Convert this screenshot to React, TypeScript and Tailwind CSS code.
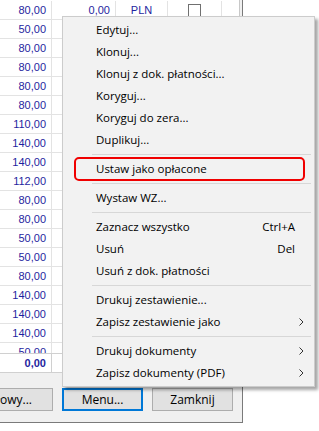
import React from "react";

const values = [
  "80,00", "50,00", "80,00", "80,00", "80,00", "80,00", "110,00", "140,00",
  "140,00", "112,00", "80,00", "80,00", "50,00", "50,00", "80,00", "140,00",
  "140,00", "140,00", "50,00",
];

type Entry =
  | { sep: true }
  | { sep?: false; label: string; shortcut?: string; sub?: boolean; marked?: boolean };

const menu: Entry[] = [
  { label: "Edytuj..." },
  { label: "Klonuj..." },
  { label: "Klonuj z dok. płatności..." },
  { label: "Koryguj..." },
  { label: "Koryguj do zera..." },
  { label: "Duplikuj..." },
  { sep: true },
  { label: "Ustaw jako opłacone", marked: true },
  { sep: true },
  { label: "Wystaw WZ..." },
  { sep: true },
  { label: "Zaznacz wszystko", shortcut: "Ctrl+A" },
  { label: "Usuń", shortcut: "Del" },
  { label: "Usuń z dok. płatności" },
  { sep: true },
  { label: "Drukuj zestawienie..." },
  { label: "Zapisz zestawienie jako", sub: true },
  { sep: true },
  { label: "Drukuj dokumenty", sub: true },
  { label: "Zapisz dokumenty (PDF)", sub: true },
];

function Chevron() {
  return (
    <svg width="5" height="8" viewBox="0 0 5 8" className="block">
      <path d="M0.5 0.5 L4 4 L0.5 7.5" fill="none" stroke="#333" strokeWidth="1" />
    </svg>
  );
}

function ContextMenu() {
  return (
    <div className="absolute left-[62px] top-[16px] w-[253px] bg-[#f2f2f2] border border-[#cccccc] py-[2px] shadow-[3px_3px_3px_rgba(0,0,0,0.35)] font-['Open_Sans',sans-serif] text-[11.5px] text-black">
      {menu.map((m, i) =>
        m.sep ? (
          <div key={i} className="h-[7px] flex items-center pl-[29px] pr-[3px]">
            <div className="h-px w-full bg-[#d7d7d7]" />
          </div>
        ) : (
          <div key={i} className="relative h-[22px] flex items-center pl-[33px] pr-[10px]">
            <span className="flex-1 whitespace-nowrap">{m.label}</span>
            {m.shortcut && <span className="mr-[9px]">{m.shortcut}</span>}
            {m.sub && <Chevron />}
            {m.marked && (
              <div className="absolute left-[11px] right-[9px] -top-[1px] -bottom-[1px] border-2 border-[#f00000] rounded-[5px]" />
            )}
          </div>
        )
      )}
    </div>
  );
}

function Row({ v, full }: { v: string; full: boolean }) {
  return (
    <div className="flex h-[19px] border-b border-[#e3e3e3] shrink-0">
      <div className="w-[52px] border-r border-[#e3e3e3] text-right pr-[5px] leading-[18px]">{v}</div>
      <div className="w-[64px] border-r border-[#e3e3e3] text-right pr-[5px] leading-[18px]">{full ? "0,00" : ""}</div>
      <div className="w-[52px] border-r border-[#e3e3e3] text-center leading-[18px]">{full ? "PLN" : ""}</div>
      <div className="w-[54px] border-r border-[#e3e3e3] flex justify-center pt-[3px]">
        {full && <div className="w-[13px] h-[13px] border border-[#707070] bg-white" />}
      </div>
      <div className="flex-1" />
    </div>
  );
}

export default function App() {
  return (
    <div className="relative w-[319px] h-[431px] overflow-hidden bg-white font-['Liberation_Sans',sans-serif]">
      <div className="w-[243px] h-[423px] bg-[#f0f0f0] border-r border-b border-[#7a7a7a] flex flex-col">
        {/* grid */}
        <div className="w-[240px] h-[353px] bg-white border-r border-[#c8c8c8] overflow-hidden pt-[1px] text-[11px] text-[#1f1fa0] flex flex-col">
          {values.map((v, i) => (
            <Row key={i} v={v} full={i === 0} />
          ))}
        </div>
        {/* summary row */}
        <div className="w-[240px] h-[20px] flex border-y border-[#d0d0d0] bg-white text-[11px] font-bold text-[#1f1fa0]">
          <div className="w-[52px] border-r border-[#d0d0d0] text-right pr-[5px] leading-[18px]">0,00</div>
          <div className="flex-1" />
        </div>
        {/* buttons */}
        <div className="flex gap-[9px] mt-[15px] ml-[-28px] text-[12px] text-black font-['Open_Sans',sans-serif]">
          <div className="w-[81px] h-[23px] bg-[#e1e1e1] border border-[#adadad] flex items-center justify-end pr-[20px] overflow-hidden whitespace-nowrap">
            Szczegółowy...
          </div>
          <div className="w-[81px] h-[23px] bg-[#e1e1e1] border-2 border-[#0078d7] flex items-center justify-center">
            Menu...
          </div>
          <div className="w-[81px] h-[23px] bg-[#e1e1e1] border border-[#adadad] flex items-center justify-center">
            Zamknij
          </div>
        </div>
      </div>
      <ContextMenu />
    </div>
  );
}
